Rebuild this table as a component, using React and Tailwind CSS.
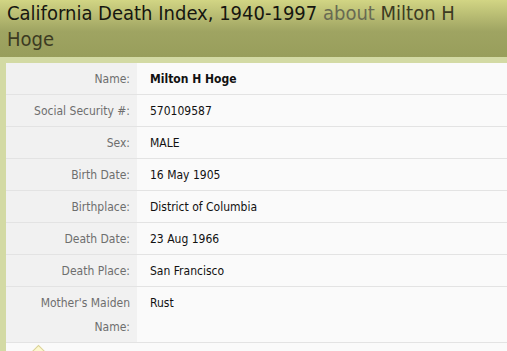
import React from 'react';

const rows = [
  { label: 'Name:', value: 'Milton H Hoge', bold: true },
  { label: 'Social Security #:', value: '570109587' },
  { label: 'Sex:', value: 'MALE' },
  { label: 'Birth Date:', value: '16 May 1905' },
  { label: 'Birthplace:', value: 'District of Columbia' },
  { label: 'Death Date:', value: '23 Aug 1966' },
  { label: 'Death Place:', value: 'San Francisco' },
  { label: "Mother's Maiden Name:", value: 'Rust', tall: true },
];

export default function App() {
  return (
    <div className="w-[507px] h-[351px] overflow-hidden bg-[#d3daa4] font-['DejaVu_Sans_Condensed','DejaVu_Sans',sans-serif]">
      {/* title bar */}
      <div className="h-[57px] px-[7px] bg-gradient-to-b from-[#d2d584] via-[#9fa462] via-55% to-[#989e5b]">
        <h1 className="text-[20px] leading-[26px] text-[#161610]">
          California Death Index, 1940-1997 <span className="text-[#686a52]">about</span>{' '}
          <span className="text-[#3c3b22]">Milton H Hoge</span>
        </h1>
      </div>

      <div className="mt-[6px] ml-[6px] bg-[#fafafa]">
        {rows.map(r => (
          <div key={r.label} className="flex border-b border-[#e3e3e3] text-[12px]">
            <div className={`w-[131px] shrink-0 bg-[#f1f1f1] text-right pr-[7px] text-[#6e6e6e] ${r.tall ? 'h-[55px] pt-[4px] leading-[24px] pl-[20px]' : 'h-[31px] pt-[2px] leading-[29px]'}`}>
              {r.label}
            </div>
            <div className={`pl-[13px] text-[#111] ${r.bold ? 'font-bold' : ''} ${r.tall ? 'pt-[4px] leading-[24px]' : 'pt-[2px] leading-[29px]'}`}>
              {r.value}
            </div>
          </div>
        ))}
        <div className="relative h-[10px] bg-[#fafafa]">
          <div className="absolute left-[27px] top-[4px] w-[11px] h-[11px] rotate-45 bg-[#fdf8cf] border border-[#d9d29a]" />
        </div>
      </div>
    </div>
  );
}
